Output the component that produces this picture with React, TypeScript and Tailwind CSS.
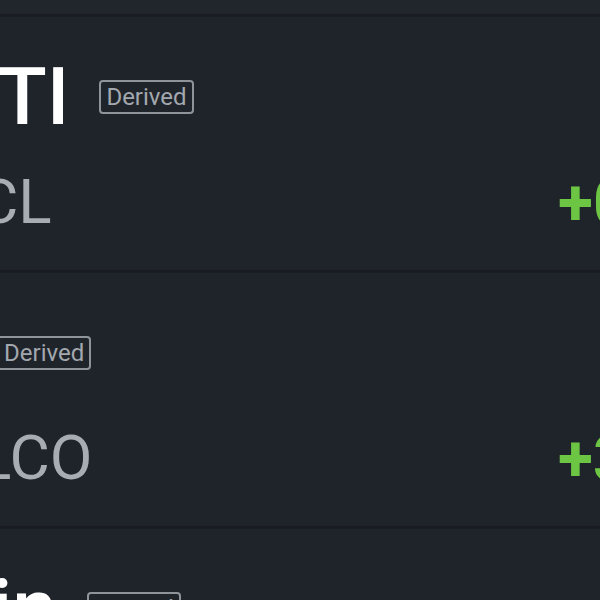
const rows = [
  { title: "WTI", shift: "ml-[-73px]", ticker: "CL", change: "+0.84%" },
  { title: "Brent", shift: "ml-[-225px]", ticker: "LCO", change: "+3.12%" },
  { title: "Tin", shift: "ml-[-57px]", ticker: "SN", change: "+1.05%" },
] as const;

function Row({ row }: { row: (typeof rows)[number] }) {
  return (
    <li className="h-[256px] border-t-[3px] border-[#191c22] pt-[40px]">
      <div className={`flex h-[80px] items-center ${row.shift}`}>
        <span className="whitespace-nowrap text-[80px] font-medium leading-none text-white">
          {row.title}
        </span>
        <span className="ml-[30px] rounded-[4px] border-2 border-[#8f949b] px-[5px] text-[24px] leading-[28px] py-[1px] text-[#a3a8af]">
          Derived
        </span>
      </div>
      <div className="ml-[-22px] mt-[33px] flex h-[62px] items-baseline">
        <span className="w-[580px] shrink-0 whitespace-nowrap text-[62px] leading-none text-[#a8adb4]">
          {row.ticker}
        </span>
        <span className="translate-y-[2px] whitespace-nowrap text-[64px] font-bold leading-none text-[#6cc644]">
          {row.change}
        </span>
      </div>
    </li>
  );
}

export default function App() {
  return (
    <div className="h-[600px] w-[600px] overflow-hidden bg-[#1f242b] font-['Roboto',sans-serif]">
      <div className="h-[14px] bg-[#21252c]" aria-hidden />
      <ul className="list-none">
        {rows.map((r) => (
          <Row key={r.title} row={r} />
        ))}
      </ul>
    </div>
  );
}
